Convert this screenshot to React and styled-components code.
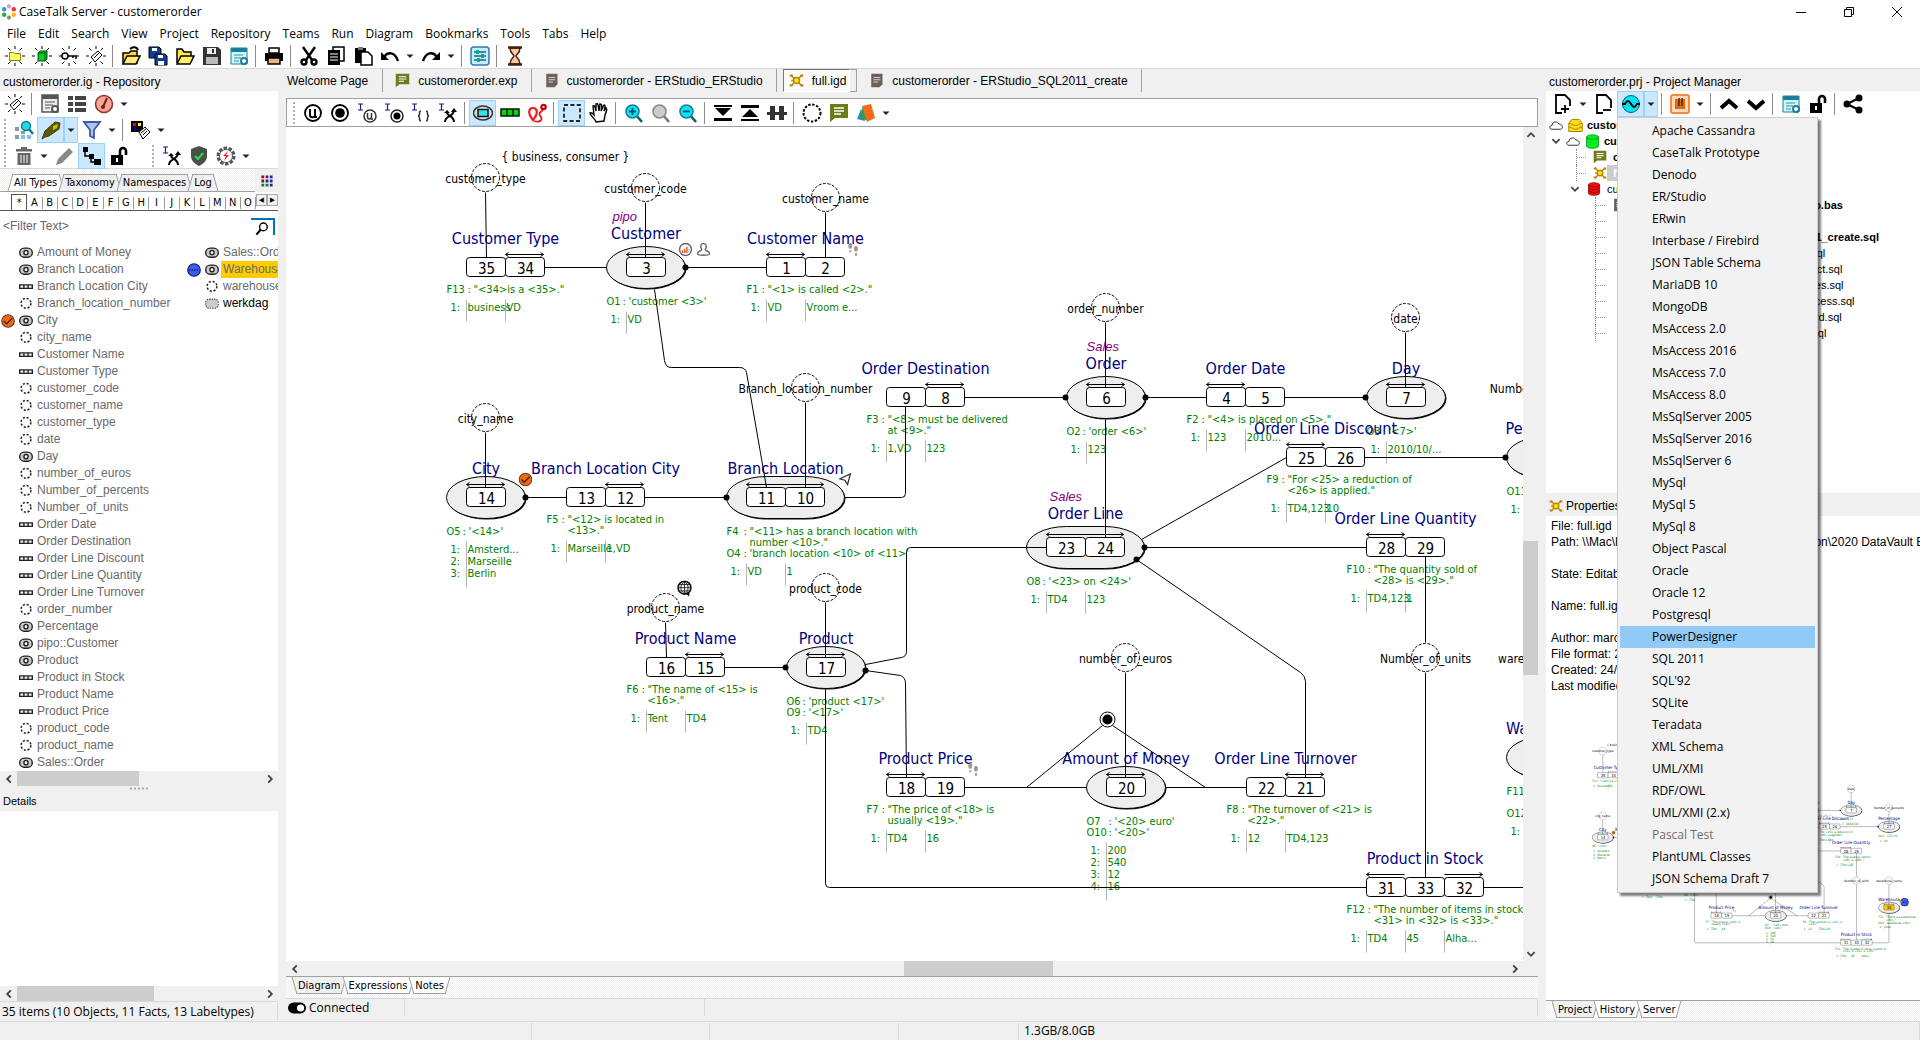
/**
 *
 * CaseTalk workspace
 *
 */

import React from 'react';
import styled, { createGlobalStyle, css } from 'styled-components';

const palette = {
  face: '#f0f0f0',
  line: '#d9d9d9',
  edge: '#a0a0a0',
  thumb: '#cdcdcd',
  hot: '#cce8ff',
  hotEdge: '#99d1ff',
  gold: '#ffcc00',
  navy: '#000080',
  green: '#008000',
  purple: '#800080',
};

const fonts = {
  ui: '"Open Sans", "Noto Sans", sans-serif',
  sans: '"Liberation Sans", Arial, sans-serif',
  tahoma: '"DejaVu Sans Condensed", "DejaVu Sans", sans-serif',
};

const GlobalStyle = createGlobalStyle`
  * { box-sizing: border-box; }
  body {
    margin: 0;
    background: ${palette.face};
    color: #000;
    font: 12px/16px ${fonts.ui};
    overflow: hidden;
  }
  button, input { font: inherit; color: inherit; }
  ul { list-style: none; margin: 0; padding: 0; }
`;

/* ---------- icons, all on a 20x20 grid ---------- */

const rays = <path d="M10 0v3M10 17v3M0 10h3M17 10h3M3 2l2.500 2.500M17 2l-2.500 2.500M3 18l2.500-2.500M17 18l-2.500-2.500" stroke="#000" />;
const caret = <path d="M5 8h10l-5 5z" fill="#222" />;
const pageLines = (
  <g>
    <path d="M2 2h16v16H2z" fill="#d9f4fb" stroke="#1b7f99" />
    <path d="M2 2h16v4H2z" fill="#1b7f99" />
    <path d="M5 9h9M5 12h7M5 15h5" stroke="#1b9cba" />
    <circle cx="15" cy="15" r="3" fill="#fff" stroke="#1b7f99" strokeWidth="2" />
  </g>
);
const pin = (
  <g stroke="#1a1a80" strokeWidth="1.200">
    <path d="M1 1h5M1 7h5M3.500 1v6" />
  </g>
);
const lockOpen = (
  <g>
    <path d="M2 9h12v10H2z" />
    <path d="M11 9V5a3 3 0 0 1 6 0v4" fill="none" stroke="#000" strokeWidth="2.600" />
    <path d="M8 12v4" stroke="#fff" strokeWidth="2" />
  </g>
);
const lens = (fill, sign) => (
  <g>
    <path d="M12 12l6 7" stroke="#155e6b" strokeWidth="2.600" />
    <circle cx="8.500" cy="8.500" r="6.500" fill={fill} stroke="#1f7f8c" strokeWidth="1.600" />
    <path d={sign} stroke="#064a55" strokeWidth="1.800" />
  </g>
);
const molecule = (
  <g>
    <path d="M3 3l14 14M17 3L3 17M3 10h4" stroke="#b8860b" strokeWidth="2" />
    <circle cx="10" cy="10" r="4" fill="#ffe600" stroke="#b8860b" strokeWidth="2" />
    <path d="M1 2h4v3H1zM15 2h4v3h-4zM1 15h4v3H1zM15 15h4v3h-4z" fill="#b8860b" />
  </g>
);
const scroll = (
  <g>
    <path d="M3 1h15v14l-4 4H3z" fill="#6d5f5a" />
    <path d="M6 6h9M6 9h9M6 12h6" stroke="#d8d0cc" strokeWidth="1.400" />
  </g>
);
const chat = (
  <g>
    <path d="M1 1h18v14H6l-5 4z" fill="#6f7a1a" />
    <path d="M5 5h10M5 8h10M5 11h7" stroke="#fff" strokeWidth="1.500" />
  </g>
);
const drum = (fill, stroke) => (
  <g fill={fill} stroke={stroke}>
    <path d="M2 4v12c0 4 16 4 16 0V4" />
    <ellipse cx="10" cy="4" rx="8" ry="3" />
  </g>
);

const art = {
  caret,
  newProject: <g>{rays}<path d="M4.500 6.500h4l1 1h6v7h-11z" fill="#ffff66" stroke="#8a8a00" /></g>,
  newModel: <g>{rays}<path d="M6 7l2-2h7v8l-2 2H6z" fill="#00d02a" stroke="#004d10" /><path d="M6 7h7v8M13 7l2-2" fill="none" stroke="#004d10" /></g>,
  newKey: <g>{rays}<circle cx="6" cy="10" r="3" fill="#fff" stroke="#000" strokeWidth="1.500" /><path d="M9 10h8v3M14 10v2" fill="none" stroke="#000" strokeWidth="1.500" /></g>,
  newTag: <g>{rays}<path d="M5 11l7-6 4 4-7 7z" fill="#fff" stroke="#000" /><path d="M8 12l5-5" stroke="#000" /></g>,
  openRecent: <g><path d="M2 7h6l2-2h6v12H2z" fill="#ffd92e" stroke="#000" strokeWidth="1.500" /><path d="M2 18l4-8h13l-4 8z" fill="#ffec7a" stroke="#000" strokeWidth="1.500" /><path d="M9 3c3-3 7-2 8 1" fill="none" stroke="#000" strokeWidth="2" /></g>,
  saveAll: <g fill="#0f3f9e" stroke="#000"><path d="M1 1h10l2 2v9H1z" /><path d="M7 8h10l2 2v9H7z" /><path d="M4 2h5v3H4zM10 9h5v3h-5zM10 15h6v4h-6z" fill="#fff" stroke="none" /></g>,
  open: <g strokeWidth="1.500" stroke="#000"><path d="M2 17V3h5l2 3h7v4" fill="#ffe94d" /><path d="M2 18l4-8h13l-4 8z" fill="#fff36b" /></g>,
  save: <g><path d="M1 1h15l3 3v15H1z" fill="#333" /><path d="M5 2h9v6H5z" fill="#eee" /><path d="M10 3h2v4h-2z" fill="#333" /><path d="M4 11h12v7H4z" fill="#bbb" /></g>,
  props: pageLines,
  print: <g><path d="M5 2h10v5H5z" fill="#fff" stroke="#000" strokeWidth="1.500" /><path d="M1 7h18v8H1z" /><path d="M4 12h12v6H4z" fill="#eab38c" stroke="#000" strokeWidth="1.500" /></g>,
  cut: <g fill="none" stroke="#000" strokeWidth="2.400"><path d="M4 1l9 13M16 1L7 14" /><circle cx="5" cy="16" r="2.500" /><circle cx="15" cy="16" r="2.500" /></g>,
  copy: <g><path d="M7 1h11v14H7z" fill="#fff" stroke="#000" strokeWidth="1.500" /><path d="M2 4h12v15H2z" /><path d="M4 8h8M4 11h8M4 14h8" stroke="#fff" /></g>,
  paste: <g><path d="M2 2h11v15H2z" /><path d="M5 1h5v3H5z" fill="#777" /><path d="M8 6h7l4 4v9H8z" fill="#fff" stroke="#000" strokeWidth="1.500" /></g>,
  undo: <g><path d="M4 11c4-6 11-5 14 4" fill="none" stroke="#000" strokeWidth="2.400" /><path d="M1 6v8h8z" /></g>,
  redo: <g><path d="M16 11c-4-6-11-5-14 4" fill="none" stroke="#000" strokeWidth="2.400" /><path d="M19 6v8h-8z" /></g>,
  options: <g><rect x="1" y="1" width="18" height="18" rx="3" fill="#c9ebff" stroke="#2f7ea8" strokeWidth="1.500" /><path d="M4 6h12M4 10h12M4 14h12" stroke="#156c8a" strokeWidth="1.400" /><path d="M6 4h3v4H6zM11 8h3v4h-3zM7 12h3v4H7z" fill="#00b09b" /></g>,
  hourglass: <g stroke="#4a1c0c" strokeWidth="1.500" fill="#f3c9a5"><path d="M5 2h10c0 5-3 6-4 8 1 2 4 3 4 8H5c0-5 3-6 4-8-1-2-4-3-4-8z" /><path d="M3 1.500h14M3 18.500h14" strokeWidth="2.500" /></g>,
  sheet: <g><path d="M2 1h16v17H2z" fill="#ececec" stroke="#555" strokeWidth="1.500" /><path d="M2 1h16v4H2z" fill="#555" /><path d="M5 8h10M5 11h8M5 14h5" stroke="#555" /><circle cx="15" cy="15" r="3" fill="#fff" stroke="#555" strokeWidth="2" /></g>,
  table: <path d="M1 2h5v4H1zM8 2h11v4H8zM1 8h5v4H1zM8 8h11v4H8zM1 14h5v4H1zM8 14h11v4H8z" fill="#444" />,
  gauge: <g><circle cx="10" cy="10" r="8.500" fill="#f3a79b" stroke="#8f3326" strokeWidth="1.500" /><path d="M9 13l4-9" stroke="#7a1d10" strokeWidth="2" /><circle cx="9" cy="13" r="2" fill="#7a1d10" /></g>,
  find: <g><path d="M1 7h4v4H1zM1 15h4v4H1zM7 11h4v3H7z" fill="#8a9aa5" /><path d="M7 15h4v4H7zM13 15h4v4h-4z" fill="#7cc7ea" /><circle cx="12" cy="6" r="4.500" fill="#27d4ea" stroke="#0b7f92" strokeWidth="1.500" /><path d="M15 9l4 5" stroke="#0b7f92" strokeWidth="2.500" /></g>,
  marker: <g><path d="M1 19l3-8L14 2l5 1-1 6-10 7-4 1z" fill="#5c5a00" stroke="#3f3e00" /><path d="M12 6l5-2-1 4-4 2z" fill="#c9c400" /></g>,
  funnel: <path d="M2 2h16l-6 8v8l-4-2v-6z" fill="#a7c7f2" stroke="#3c5aa6" strokeWidth="1.800" />,
  palette: <g><path d="M0 1h12v11H0z" /><path d="M2 3h3v3H2z" fill="#f00" /><path d="M7 3h3v3H7z" fill="#ff0" /><path d="M2 10l2-3 2 3z" fill="#00f" /><path d="M8 12l6-5 5 5-7 7z" fill="#fff" stroke="#000" /><path d="M10 13l5-4M12 15l4-4" stroke="#000" /></g>,
  trash: <g fill="#666"><path d="M2 3h16v2.500H2zM7 1h6v2H7z" /><path d="M3.500 7h13v12h-13z" /><path d="M7 9v8M10 9v8M13 9v8" stroke="#fff" /></g>,
  pencil: <path d="M1 19l2-6L14 2l4 4L7 17z" fill="#888" />,
  tree: <g><path d="M1 1h5v5H1zM7 8h5v5H7zM12 13h7v6h-7z" /><path d="M3 5v5h6v6h5" fill="none" stroke="#000" strokeWidth="1.500" /></g>,
  lockOpen,
  split: <g>{pin}<path d="M7 19c0-7 9-5 9-12M16 19c0-7-7-5-7-10" fill="none" stroke="#000" strokeWidth="2" /><path d="M13 9l3-4 3 4zM6 10l3-3 3 3z" /></g>,
  shield: <g><path d="M10 0l8 3v7c0 5-4 8-8 10-4-2-8-5-8-10V3z" fill="#4a4f4a" /><path d="M6 10l3 3 5-6" fill="none" stroke="#22e04a" strokeWidth="2" /></g>,
  gear: <g><circle cx="10" cy="10" r="8" fill="#fff" stroke="#555" strokeWidth="3" strokeDasharray="3.500 1.500" /><circle cx="10" cy="10" r="6.500" fill="#fff" stroke="#555" /><path d="M12 5l-5 5h3l-2 5 5-6h-3z" fill="#f21d1d" /></g>,
  letters: <g><path d="M2 2h4v4H2zM2 8h4v4H2zM8 2h4v4H8z" fill="#7a1730" /><path d="M14 2h4v4h-4zM8 8h4v4H8zM14 8h4v4h-4zM14 14h4v4h-4z" fill="#1a2a9a" /><path d="M2 14h4v4H2zM8 14h4v4H8z" fill="#127a3a" /></g>,
  magnifier: <g fill="none" stroke="#000"><circle cx="12" cy="7" r="5.500" strokeWidth="2" /><path d="M8 11l-6 7" strokeWidth="3" /></g>,
  total: <g fill="none" stroke="#000"><circle cx="10" cy="10" r="8" strokeWidth="1.800" /><path d="M7 6v6c0 3 5 3 5 0V6M12 6v8h2" strokeWidth="2" /></g>,
  ring: <g><circle cx="10" cy="10" r="8" fill="none" stroke="#000" strokeWidth="1.800" /><circle cx="10" cy="10" r="4.800" /></g>,
  totalPin: <g>{pin}<g fill="none" stroke="#333"><circle cx="13" cy="13" r="6" strokeWidth="1.500" /><path d="M10.500 10v4c0 2.500 4 2.500 4 0v-4v6h1.500" strokeWidth="1.500" /></g></g>,
  ringPin: <g>{pin}<circle cx="13" cy="13" r="6" fill="none" stroke="#222" strokeWidth="1.500" /><circle cx="13" cy="13" r="3.500" /></g>,
  bracePin: <g>{pin}<path d="M10 8c-3 0 0 5-3 5 3 0 0 5 3 5M15 8c3 0 0 5 3 5-3 0 0 5-3 5" fill="none" stroke="#333" strokeWidth="1.500" /></g>,
  object: <g><ellipse cx="10" cy="10" rx="9.500" ry="7" fill="#ddd" stroke="#333" strokeWidth="1.500" /><path d="M5 6.500h10v7H5z" fill="#2ee6f5" stroke="#111" strokeWidth="1.500" /></g>,
  fact: <path d="M1 6h6v7H1zM7 6h6v7H7zM13 6h6v7h-6z" fill="#00d800" stroke="#111" strokeWidth="1.500" />,
  route: <g fill="none" stroke="#f01818" strokeWidth="2.200"><path d="M6 17C0 10 2 5 6 5s6 5 0 12z" /><path d="M7 18c5 2 9-1 7-4s-3-3 2-7" strokeWidth="1.800" /><circle cx="16.500" cy="4" r="2.200" stroke="#c00" /></g>,
  select: <path d="M2 2h16v16H2z" fill="none" stroke="#222" strokeWidth="1.800" strokeDasharray="4 2.400" />,
  hand: <path d="M7 19c-1-4-6-6-6-9 2-1 3 1 4 2L4 3c2-1 2 1 3 5V1c2-1 2 0 3 7l1-7c2 0 2 1 1 7l3-6c2 0 1 2 0 6l2-3c2 1 0 4-1 7l-1 6z" fill="#fff" stroke="#000" strokeWidth="1.400" />,
  zoomIn: lens('#00e5ff', 'M5 8.500h7M8.500 5v7'),
  zoomReset: <g><path d="M12 12l6 7" stroke="#777" strokeWidth="2.600" /><circle cx="8.500" cy="8.500" r="6.500" fill="#ccc" stroke="#888" strokeWidth="1.600" /></g>,
  zoomOut: lens('#00e5ff', 'M5 8.500h7'),
  alignDown: <path d="M1 2h18v2H1zM2 5h16l-8 8zM1 15h18v3H1z" />,
  alignUp: <path d="M1 2h18v3H1zM10 6l8 8H2zM1 16h18v2H1z" />,
  alignMid: <path d="M3 3h5v14H3zM12 3h5v14h-5zM0 9h20v3H0z" fill="#333" />,
  label: <circle cx="10" cy="10" r="8.500" fill="none" stroke="#000" strokeWidth="2" strokeDasharray="2.400 1.600" />,
  chat,
  cards: <g><path d="M1 16l4-10 4 12z" fill="#2d7ff0" /><path d="M3 15L7 3l6 15z" fill="#2aa04c" /><path d="M6 3l9-2 4 14-8 4z" fill="#f26b1d" /></g>,
  addFile: <g fill="#fff" stroke="#000" strokeWidth="1.800"><path d="M9 19H3V1h9l5 5v6" /><path d="M12 11v8M8 15h8" /></g>,
  removeFile: <g fill="#fff" stroke="#000" strokeWidth="1.800"><path d="M9 19H3V1h9l5 5v8" /><path d="M9 16h8" /></g>,
  generate: <g><circle cx="10" cy="10" r="8.500" fill="#00e5f5" stroke="#05626b" /><path d="M1 10h3c2-4 4-4 6 0s4 4 6 0h3" fill="none" stroke="#000" strokeWidth="2" /></g>,
  package: <g><rect x="1" y="1" width="18" height="18" rx="2" fill="#ffd9b8" stroke="#f08a3c" strokeWidth="2" /><path d="M5 5h10v10H5z" fill="#d96a10" /><path d="M9 4v8M12 4v8" stroke="#5a2500" strokeWidth="1.500" /></g>,
  up: <path d="M2 14l8-7 8 7" fill="none" stroke="#000" strokeWidth="4" />,
  down: <path d="M2 7l8 7 8-7" fill="none" stroke="#000" strokeWidth="4" />,
  share: <g><path d="M16 4L4 10l12 6" fill="none" stroke="#000" strokeWidth="2" /><circle cx="16" cy="4" r="3.500" /><circle cx="4" cy="10" r="3.500" /><circle cx="16" cy="16" r="3.500" /></g>,
  molecule,
  scroll,
  cloud: <path d="M4 15c-4 0-4-5 0-5 0-6 8-6 9-2 6 0 6 7 2 7z" fill="#fff" stroke="#333" strokeWidth="1.300" />,
  cabinet: <g fill="#ffd91a" stroke="#a88a00" strokeWidth="1.300"><path d="M1 7l4-5h10l4 5v11H1z" /><path d="M1 7c5 0 4 3 9 3s4-3 9-3M1 12c5 0 4 3 9 3s4-3 9-3" fill="none" /></g>,
  greenDrum: drum('#00f01e', '#008a14'),
  redDrum: <g>{drum('#f20d0d', '#7a0000')}<path d="M2 8c0 4 16 4 16 0M2 12c0 4 16 4 16 0" fill="none" stroke="#7a0000" /></g>,
  chevron: <path d="M4 7l6 6 6-6" fill="none" stroke="#444" strokeWidth="3" />,
  logo: <g><circle cx="10" cy="3" r="2.600" fill="#c9a0d8" /><circle cx="16" cy="6.500" r="2.800" fill="#f0392b" /><circle cx="16" cy="13.500" r="2.800" fill="#f5b921" /><circle cx="10" cy="17" r="2.600" fill="#8a8a8a" /><circle cx="4" cy="13.500" r="2.800" fill="#3aa34a" /><circle cx="4" cy="6.500" r="2.800" fill="#2b9be0" /></g>,
  toggle: <g><rect x="0" y="4" width="20" height="12" rx="6" /><circle cx="14" cy="10" r="4" fill="#fff" /></g>,
  objectType: <g><rect x="1" y="3" width="18" height="13" rx="6.500" fill="#ccc" stroke="#222" strokeWidth="2" /><circle cx="10" cy="9.500" r="3" fill="#fff" stroke="#222" strokeWidth="2" /></g>,
  factType: <path d="M1 7h6v5H1zM7 7h6v5H7zM13 7h6v5h-6z" fill="#eee" stroke="#222" strokeWidth="2" />,
  labelType: <circle cx="10" cy="9" r="7" fill="none" stroke="#222" strokeWidth="2.200" strokeDasharray="3 2.500" />,
  valueType: <rect x="1" y="3" width="18" height="13" rx="5" fill="#ccc" stroke="#444" strokeWidth="1.500" strokeDasharray="2 1.500" />,
  check: <g><circle cx="10" cy="10" r="9" fill="#f26a10" stroke="#6b3a1a" strokeWidth="1.500" /><path d="M4 10l4 4 8-8" fill="none" stroke="#3f2412" strokeWidth="2" /></g>,
  dots: <g><circle cx="10" cy="10" r="9" fill="#3a5cf5" stroke="#101860" strokeWidth="1.500" /><path d="M3 10h14" stroke="#101860" strokeWidth="2" strokeDasharray="2 1.500" /></g>,
};

const Svg = styled.svg`
  display: block;
  flex: none;
  width: ${p => p.$size}px;
  height: ${p => p.$size}px;
`;

const Icon = ({ name, size = 20 }) => (
  <Svg $size={size} viewBox="0 0 20 20" aria-hidden="true">{art[name]}</Svg>
);

/* ---------- window chrome ---------- */

const Window = styled.div`
  display: flex;
  flex-direction: column;
  height: 100vh;
`;

const TitleBar = styled.header`
  display: flex;
  align-items: center;
  gap: 2px;
  height: 24px;
  padding-left: 1px;
  background: #fff;
  & h1 {
    flex: 1;
    margin: 0;
    font-size: 12px;
    font-weight: 400;
  }
`;

const Caption = styled.button`
  display: flex;
  align-items: center;
  justify-content: center;
  width: 46px;
  height: 24px;
  padding: 0;
  border: 0;
  background: none;
`;

const MenuBar = styled.nav`
  display: flex;
  height: 19px;
  padding-left: 1px;
  background: #fff;
  & button {
    padding: 0 6px;
    border: 0;
    background: none;
    line-height: 17px;
  }
`;

const Toolbar = styled.div`
  display: flex;
  align-items: center;
  flex: none;
  height: ${p => p.$height || 26}px;
  padding-left: ${p => p.$indent || 0}px;
  background: #fff;
  ${p => p.$framed && css`border: 1px solid ${palette.edge};`}
  ${p => p.$ruled && css`border-bottom: 1px solid ${palette.line};`}
`;

const ToolButton = styled.button`
  display: flex;
  align-items: center;
  justify-content: center;
  flex: none;
  width: ${p => (p.$narrow ? 14 : 27)}px;
  height: 26px;
  padding: 0;
  border: 1px solid ${p => (p.$on ? palette.hotEdge : 'transparent')};
  background: ${p => (p.$on ? palette.hot : 'none')};
`;

const Rule = styled.i`
  flex: none;
  width: 2px;
  height: 22px;
  margin: 0 3px;
  border-left: 1px solid #8c8c8c;
`;

const Grip = styled.i`
  flex: none;
  width: 10px;
  height: 24px;
  margin-left: ${p => p.$gap || 0}px;
  background: radial-gradient(circle, #b0b0b0 1px, transparent 1px) 0 0 / 10px 4px;
`;

/* "|" is a rule, ":" a grip, a leading "*" marks a pressed button */
const Tools = ({ items }) => items.map((item, i) => {
  if (item === '|') return <Rule key={i} />;
  if (item === ':') return <Grip key={i} $gap={i ? 16 : 0} />;
  const on = item[0] === '*';
  const name = on ? item.slice(1) : item;
  const narrow = name === 'caret';
  return (
    <ToolButton key={i} $on={on} $narrow={narrow} aria-label={name}>
      <Icon name={name} size={narrow ? 14 : 20} />
    </ToolButton>
  );
});

const Workspace = styled.main`
  display: flex;
  gap: 8px;
  flex: 1;
  min-height: 0;
  border-top: 1px solid ${palette.line};
`;

const Column = styled.section`
  display: flex;
  flex-direction: column;
  flex: ${p => (p.$width ? `0 0 ${p.$width}px` : '1')};
  min-width: 0;
  min-height: 0;
`;

const PaneTitle = styled.h2`
  display: flex;
  align-items: center;
  gap: 3px;
  flex: none;
  height: ${p => p.$height || 22}px;
  margin: 0;
  padding: ${p => p.$top || 0}px 3px 0;
  font: 400 ${p => p.$size || 12}px/16px ${fonts.sans};
`;

const StatusBar = styled.footer`
  display: flex;
  flex: none;
  height: ${p => p.$height || 19}px;
  align-items: ${p => (p.$top ? 'flex-start' : 'center')};
  border-top: 1px solid ${palette.line};
`;

const StatusCell = styled.span`
  display: flex;
  align-items: center;
  gap: 3px;
  flex: ${p => (p.$width ? `0 0 ${p.$width}px` : '1')};
  height: 17px;
  padding-left: ${p => p.$pad || 2}px;
  border-right: 1px solid ${palette.line};
  white-space: nowrap;
`;

/* ---------- scroll bars ---------- */

const Bar = styled.div`
  display: flex;
  flex: none;
  flex-direction: ${p => (p.$vertical ? 'column' : 'row')};
  align-items: center;
  ${p => (p.$vertical ? 'width: 15px;' : 'height: 15px;')}
  padding-right: ${p => (p.$corner ? 15 : 0)}px;
  background: ${palette.face};
`;

const Arrow = styled.button`
  display: flex;
  align-items: center;
  justify-content: center;
  flex: none;
  width: 17px;
  height: 15px;
  padding: 0;
  border: 0;
  background: none;
  & svg { transform: rotate(${p => p.$turn}deg); }
`;

const Track = styled.div`
  display: flex;
  flex: 1;
  align-self: stretch;
  flex-direction: ${p => (p.$vertical ? 'column' : 'row')};
  &:before { content: ''; flex: ${p => p.$before}; }
  &:after { content: ''; flex: ${p => p.$after}; }
  & i { flex: ${p => p.$thumb}; background: ${palette.thumb}; }
`;

const ScrollBar = ({ vertical, corner, before, thumb, after }) => (
  <Bar $vertical={vertical} $corner={corner}>
    <Arrow $turn={vertical ? 180 : 90} aria-label="Scroll back"><Icon name="chevron" size={12} /></Arrow>
    <Track $vertical={vertical} $before={before} $thumb={thumb} $after={after}><i /></Track>
    <Arrow $turn={vertical ? 0 : -90} aria-label="Scroll forward"><Icon name="chevron" size={12} /></Arrow>
  </Bar>
);

/* ---------- notebook tabs with slanted edges ---------- */

const TabStrip = styled.div`
  display: flex;
  flex: none;
  align-items: ${p => (p.$below ? 'flex-start' : 'flex-end')};
  height: ${p => p.$height}px;
  padding-left: ${p => (p.$below ? 8 : 10)}px;
  font: 11px/16px ${fonts.tahoma};
  background: repeating-conic-gradient(#fff 0 25%, ${palette.face} 0 50%) 0 0 / 2px 2px;
  ${p => (p.$below
    ? css`border-top: 1px solid ${palette.edge};`
    : css`border-bottom: 1px solid ${palette.edge};`)}
`;

const Tab = styled.button`
  position: relative;
  z-index: 0;
  height: 17px;
  padding: 0 4px;
  border: 0;
  background: none;
  &:before, &:after {
    content: '';
    position: absolute;
    z-index: -1;
    top: 0;
    bottom: 0;
    width: 52%;
    background: ${p => p.$fill};
    border: 0 solid ${palette.edge};
    ${p => (p.$below ? 'border-bottom-width: 1px;' : 'border-top-width: 1px;')}
  }
  &:before {
    left: 0;
    border-left-width: 1px;
    transform: skewX(${p => (p.$below ? 16 : -16)}deg);
  }
  &:after {
    right: 0;
    border-right-width: 1px;
    transform: skewX(${p => (p.$below ? -16 : 16)}deg);
  }
`;

const Tabs = ({ names, height, below }) => (
  <TabStrip $height={height} $below={below}>
    {names.map((name, i) => (
      <Tab key={name} $below={below} $fill={(i === 0) === !below ? '#fff' : palette.face}>{name}</Tab>
    ))}
  </TabStrip>
);

/* ---------- repository ---------- */

const TypeTabs = styled.div`
  display: grid;
  grid-template-columns: 1fr 18px;
  column-gap: 5px;
  align-items: center;
`;

const LetterRow = styled.div`
  display: flex;
  align-items: flex-end;
  flex: none;
  height: 19px;
  padding-left: 11px;
  overflow: hidden;
  background: #fff;
  border-bottom: 1px solid #555;
  font: 11px/14px ${fonts.tahoma};
`;

const Letter = styled.button`
  flex: 1;
  height: ${p => (p.$on ? 16 : 12)}px;
  margin-bottom: ${p => (p.$on ? 0 : 1)}px;
  padding: 0;
  border: 0 solid ${p => (p.$on ? '#555' : '#999')};
  border-width: ${p => (p.$on ? '1px 1px 0' : '0 1px 0 0')};
  background: #fff;
  line-height: 12px;
`;

const Spin = styled.button`
  width: 11px;
  height: 12px;
  margin-bottom: 4px;
  padding: 0;
  border: 1px solid #aaa;
  background: ${palette.face};
  font-size: 7px;
  line-height: 9px;
`;

const FilterRow = styled.label`
  display: flex;
  align-items: center;
  flex: none;
  height: 33px;
  padding: 0 3px 3px;
  background: #fff;
  font: 12px/16px ${fonts.sans};
  & input {
    flex: 1;
    min-width: 0;
    padding: 0;
    border: 0;
    outline: 0;
    &::placeholder { color: #666; opacity: 1; }
  }
`;

const Seek = styled.button`
  width: 24px;
  height: 17px;
  padding: 2px 4px;
  border: solid #0072b5;
  border-width: 2px 2px 0 0;
  background: #fff;
`;

const TypeLists = styled.div`
  display: grid;
  grid-template-columns: 186px 1fr;
  flex: none;
  overflow: hidden;
  background: #fff;
  font: 12px/17px ${fonts.sans};
  color: #6a6a6a;
`;

const TypeRow = styled.li`
  display: grid;
  grid-template-columns: 16px 14px 1fr;
  align-items: center;
  column-gap: 2px;
  height: 17px;
  padding-left: 1px;
  white-space: nowrap;
  & span {
    padding: 0 2px;
    background: ${p => (p.$hot ? palette.gold : 'none')};
    color: ${p => (p.$dark ? '#000' : 'inherit')};
  }
`;

const Splitter = styled.div`
  flex: none;
  width: 20px;
  height: 5px;
  margin: 0 auto;
  background: radial-gradient(circle, #aaa 1px, transparent 1px) center / 4px 4px;
`;

const Blank = styled.div`
  flex: 1;
  background: #fff;
`;

const O = 'objectType';
const F = 'factType';
const L = 'labelType';

const typesLeft = [
  [O, 'Amount of Money'], [O, 'Branch Location'], [F, 'Branch Location City'], [L, 'Branch_location_number'],
  [O, 'City', 'check'], [L, 'city_name'], [F, 'Customer Name'], [F, 'Customer Type'], [L, 'customer_code'],
  [L, 'customer_name'], [L, 'customer_type'], [L, 'date'], [O, 'Day'], [L, 'number_of_euros'],
  [L, 'Number_of_percents'], [L, 'Number_of_units'], [F, 'Order Date'], [F, 'Order Destination'],
  [F, 'Order Line Discount'], [F, 'Order Line Quantity'], [F, 'Order Line Turnover'], [L, 'order_number'],
  [O, 'Percentage'], [O, 'pipo::Customer'], [O, 'Product'], [F, 'Product in Stock'], [F, 'Product Name'],
  [F, 'Product Price'], [L, 'product_code'], [L, 'product_name'], [O, 'Sales::Order'],
];

const typesRight = [
  [O, 'Sales::Order Line'], [O, 'Warehouse', 'dots'], [L, 'warehouse_name'], ['valueType', 'werkdag'],
];

const TypeList = ({ rows }) => (
  <ul>
    {rows.map(([icon, name, badge]) => (
      <TypeRow key={name} $hot={badge === 'dots'} $dark={icon === 'valueType'}>
        {badge ? <Icon name={badge} size={14} /> : <i />}
        <Icon name={icon} size={14} />
        <span>{name}</span>
      </TypeRow>
    ))}
  </ul>
);

const Repository = () => (
  <Column $width={278}>
    <PaneTitle $top={4}>customerorder.ig - Repository</PaneTitle>
    <Toolbar $indent={1}><Tools items={['newTag', '|', 'sheet', 'table', 'gauge', 'caret']} /></Toolbar>
    <Toolbar><Tools items={[':', 'find', '*marker', '*caret', 'funnel', 'caret', '|', 'palette', 'caret']} /></Toolbar>
    <Toolbar $ruled><Tools items={[':', 'trash', 'caret', 'pencil', '*tree', 'lockOpen', ':', 'split', 'shield', 'gear', 'caret']} /></Toolbar>
    <TypeTabs>
      <Tabs names={['All Types', 'Taxonomy', 'Namespaces', 'Log']} height={23} />
      <Icon name="letters" size={14} />
    </TypeTabs>
    <LetterRow>
      {'*ABCDEFGHIJKLMNO'.split('').map(c => <Letter key={c} $on={c === '*'}>{c}</Letter>)}
      <Spin aria-label="Previous letters">◀</Spin>
      <Spin aria-label="Next letters">▶</Spin>
    </LetterRow>
    <FilterRow>
      <input placeholder="<Filter Text>" aria-label="Filter Text" />
      <Seek aria-label="Find"><Icon name="magnifier" size={14} /></Seek>
    </FilterRow>
    <TypeLists>
      <TypeList rows={typesLeft} />
      <TypeList rows={typesRight} />
    </TypeLists>
    <ScrollBar before={0} thumb={122} after={122} />
    <Splitter />
    <PaneTitle $height={20} $size={11}>Details</PaneTitle>
    <Blank />
    <ScrollBar before={0} thumb={137} after={107} />
    <StatusBar $height={20}><StatusCell>35 items (10 Objects, 11 Facts, 13 Labeltypes)</StatusCell></StatusBar>
  </Column>
);

/* ---------- diagram ---------- */

const ROLE = 39;

const labels = [
  [486, 178, 'customer_type'], [646, 188, 'customer_code'], [826, 198, 'customer_name'],
  [486, 418, 'city_name'], [806, 388, 'Branch_location_number'], [666, 608, 'product_name'],
  [826, 588, 'product_code'], [1106, 308, 'order_number'], [1406, 318, 'date'],
  [1126, 658, 'number_of_euros'], [1426, 658, 'Number_of_units'],
  [1546, 388, 'Number_of_percents'], [1546, 658, 'warehouse_name'],
];

/* bars: [first role, last role, heads] - l and r tell on which side an arrow head is drawn */
const types = [
  { x: 467, y: 258, name: 'Customer Type', roles: [35, 34], bars: [[1, 1, 'lr']], text: [['F13', 7, '"<34>is a <35>."']], rows: [['business', 'VD']] },
  { x: 627, y: 258, name: 'Customer', ns: 'pipo', nsX: 613, object: true, roles: [3], bars: [[0, 0, 'lr']], text: [['O1', 2, "'customer <3>'"]], rows: [['VD']] },
  { x: 767, y: 258, name: 'Customer Name', roles: [1, 2], bars: [[0, 0, 'lr']], text: [['F1', 1, '"<1> is called <2>."']], rows: [['VD', 'Vroom e...']] },
  { x: 467, y: 488, name: 'City', object: true, roles: [14], bars: [[0, 0, 'lr']], text: [['O5', 2, "'<14>'"]], rows: [['Amsterd...'], ['Marseille'], ['Berlin']] },
  { x: 567, y: 488, name: 'Branch Location City', roles: [13, 12], bars: [[1, 1, 'lr']], text: [['F5', 1, '"<12> is located in', '<13>."']], rows: [['Marseille', '1,VD']] },
  { x: 747, y: 488, name: 'Branch Location', object: true, roles: [11, 10], bars: [[0, 1, 'lr']], text: [['F4', 3, '"<11> has a branch location with', 'number <10>."'], ['O4', 3, "'branch location <10> of <11>'"]], rows: [['VD', '1']] },
  { x: 647, y: 658, name: 'Product Name', roles: [16, 15], bars: [[1, 1, 'lr']], text: [['F6', 1, '"The name of <15> is', '<16>."']], rows: [['Tent', 'TD4']] },
  { x: 807, y: 658, name: 'Product', object: true, roles: [17], bars: [[0, 0, 'lr']], text: [['O6', 2, "'product <17>'"], ['O9', 2, "'<17>'"]], rows: [['TD4']] },
  { x: 887, y: 388, name: 'Order Destination', roles: [9, 8], bars: [[1, 1, 'lr']], text: [['F3', 1, '"<8> must be delivered', 'at <9>."']], rows: [['1,VD', '123']] },
  { x: 1087, y: 388, name: 'Order', ns: 'Sales', nsX: 1087, object: true, roles: [6], bars: [[0, 0, 'lr']], text: [['O2', 2, "'order <6>'"]], rows: [['123']] },
  { x: 1207, y: 388, name: 'Order Date', roles: [4, 5], bars: [[0, 0, 'lr']], text: [['F2', 1, '"<4> is placed on <5>."']], rows: [['123', '2010...']] },
  { x: 1387, y: 388, name: 'Day', object: true, roles: [7], bars: [[0, 0, 'lr']], text: [['O3', 2, "'<7>'"]], rows: [['2010/10/...']] },
  { x: 1287, y: 448, name: 'Order Line Discount', roles: [25, 26], bars: [[0, 0, 'lr']], text: [['F9', 1, '"For <25> a reduction of', '<26> is applied."']], rows: [['TD4,123', '10']] },
  { x: 1047, y: 538, name: 'Order Line', ns: 'Sales', nsX: 1050, object: true, roles: [23, 24], bars: [[0, 1, 'lr']], text: [['O8', 2, "'<23> on <24>'"]], rows: [['TD4', '123']] },
  { x: 1367, y: 538, name: 'Order Line Quantity', roles: [28, 29], bars: [[0, 0, 'lr']], text: [['F10', 7, '"The quantity sold of', '<28> is <29>."']], rows: [['TD4,123', '1']] },
  { x: 887, y: 778, name: 'Product Price', roles: [18, 19], bars: [[0, 0, 'lr']], text: [['F7', 1, '"The price of <18> is', 'usually <19>."']], rows: [['TD4', '16']] },
  { x: 1107, y: 778, name: 'Amount of Money', object: true, roles: [20], bars: [[0, 0, 'lr']], text: [['O7', 8, "'<20> euro'"], ['O10', 8, "'<20>'"]], rows: [['200'], ['540'], ['12'], ['16']] },
  { x: 1247, y: 778, name: 'Order Line Turnover', roles: [22, 21], bars: [[1, 1, 'lr']], text: [['F8', 1, '"The turnover of <21> is', '<22>."']], rows: [['12', 'TD4,123']] },
  { x: 1367, y: 878, name: 'Product in Stock', roles: [31, 33, 32], bars: [[0, 0, 'l'], [2, 2, 'r']], text: [['F12', 7, '"The number of items in stock of', '<31> in <32> is <33>."']], rows: [['TD4', '45', 'Alha...']] },
  { x: 1527, y: 448, name: 'Percentage', object: true, roles: [27], bars: [[0, 0, 'lr']], text: [['O11', 8, "'<27>%'"]], rows: [['10']] },
  { x: 1527, y: 748, name: 'Warehouse', object: true, gold: true, roles: [30], bars: [[0, 0, 'lr']], text: [['F11', 8, '"There is a warehouse', '<30>."'], ['O12', 8, "'warehouse <30>'"]], rows: [['Utrec...']] },
];

const wires = [
  // label types
  'M486 193L487 258', 'M646 203V258', 'M826 213V258', 'M486 433V488', 'M806 403V488', 'M666 623L667 658',
  'M826 603V658', 'M1106 323V388', 'M1406 333V388', 'M1126 673V778', 'M1426 673V878', 'M1546 403V448', 'M1546 673V748',
  // roles
  'M545 268H607', 'M686 268H767', 'M526 498H567', 'M645 498H727', 'M725 668H787', 'M965 398H1067',
  'M1146 398H1207', 'M1285 398H1367', 'M1365 458H1507', 'M1145 548H1367', 'M965 788H1087', 'M1166 788H1247',
  'M655 290L665 361Q666 368 672 368H740Q746 368 747 373L767 488',
  'M845 498H902Q906 498 906 494V407', 'M1106 420V538', 'M1047 548H911Q907 548 907 552V652Q907 657 902 658L866 665',
  'M866 671L901 676Q906 678 906 684L907 778', 'M1142 540L1287 458',
  'M1137 560L1301 673Q1306 677 1306 682V778', 'M1426 557V643', 'M826 690V884Q826 888 830 888H1367',
  'M1484 888H1542Q1546 888 1546 884V780',
  'M1103 726L1027 788', 'M1113 726L1206 788',
];

const dots = [
  [686, 268], [526, 498], [727, 498], [786, 668], [866, 671], [1066, 398], [1146, 398], [1366, 398],
  [1145, 548], [1137, 560], [1506, 458],
];

const Title = styled.text`
  font: 16px ${fonts.tahoma};
  fill: ${palette.navy};
  text-anchor: middle;
`;

const Space = styled.text`
  font: italic 13px ${fonts.sans};
  fill: ${palette.purple};
`;

const RoleNumber = styled.text`
  font: 15px ${fonts.tahoma};
  text-anchor: middle;
`;

const LabelText = styled.text`
  font: 12px ${fonts.tahoma};
  text-anchor: ${p => p.$anchor || 'middle'};
`;

const Verbal = styled.text`
  font: 11px ${fonts.tahoma};
  fill: ${palette.green};
`;

const Mark = ({ x, y, size, children }) => (
  <svg x={x - (size / 2)} y={y - (size / 2)} width={size} height={size} viewBox="0 0 20 20">{children}</svg>
);

function Type({ x, y, name, ns, nsX, object, gold, roles, bars, text, rows }) {
  const width = roles.length * ROLE;
  let line = y + (object ? 47 : 35) - 11;
  const verbal = text.map(([code, dx, ...lines]) => lines.map((words, i) => {
    line += 11;
    return (
      <g key={code + words}>
        {i === 0 && <Verbal x={x - 20} y={line}>{code}</Verbal>}
        {i === 0 && <Verbal x={x + dx - 6} y={line}>:</Verbal>}
        <Verbal x={x + dx} y={line}>{words}</Verbal>
      </g>
    );
  }));
  const top = line + 18;
  return (
    <g>
      {object && <rect x={x - 20} y={y - 11} width={width + 40} height="42" rx="40" ry="21" fill="#000" transform="translate(1 1)" />}
      {object && <rect x={x - 20} y={y - 11} width={width + 40} height="42" rx="40" ry="21" fill="#eee" stroke="#000" />}
      {ns && <Space x={nsX} y={y - 37}>{ns}</Space>}
      <Title x={x + (width / 2)} y={y - (ns ? 19 : 14)}>{name}</Title>
      {bars.map(([from, to, heads]) => {
        const l = x + (from * ROLE);
        const r = x + ((to + 1) * ROLE) - 1;
        return (
          <path
            key={from}
            fill="none"
            stroke="#000"
            d={`M${l} ${y - 3}H${r}${heads.includes('l') ? `M${l + 3} ${y - 5}l-3 2 3 2` : ''}${heads.includes('r') ? `M${r - 3} ${y - 5}l3 2-3 2` : ''}`}
          />
        );
      })}
      {roles.map((role, i) => (
        <g key={role}>
          <rect x={x + (i * ROLE)} y={y} width={ROLE} height="19" rx="3" fill={gold ? palette.gold : '#fff'} stroke="#000" />
          <RoleNumber x={x + (i * ROLE) + 20} y={y + 16}>{role}</RoleNumber>
        </g>
      ))}
      {verbal}
      {roles.map((role, i) => (
        <path key={role} d={`M${x + (i * ROLE)} ${top - 11}v${22 + ((rows.length - 1) * 12)}`} stroke="#b4b4b4" />
      ))}
      {rows.map((cells, i) => (
        <g key={cells[0]}>
          <Verbal x={x - 16} y={top + (i * 12)}>{i + 1}:</Verbal>
          {cells.map((cell, c) => <Verbal key={cell} x={x + (c * ROLE) + 1} y={top + (i * 12)}>{cell}</Verbal>)}
        </g>
      ))}
    </g>
  );
}

const feet = <path d="M5 1c4-1 4 5 2 8H4C2 6 2 2 5 1zM4 11h3v3H4zM13 5c4-1 4 5 2 8h-3c-2-3-2-7 1-8zM12 15h3v4h-3z" fill="#a8968e" />;

const Drawing = () => (
  <g>
    <LabelText x="502" y="161" $anchor="start">{'{ business, consumer }'}</LabelText>
    {types.map(type => <Type key={type.name} {...type} />)}
    {labels.map(([x, y, name]) => (
      <g key={name}>
        <circle cx={x} cy={y} r="14" fill="none" stroke="#000" strokeDasharray="3 1.500" />
        <LabelText x={x} y={y + 5}>{name}</LabelText>
      </g>
    ))}
    <path d={wires.join('')} fill="none" stroke="#000" />
    {dots.map(([x, y]) => <circle key={`${x}-${y}`} cx={x} cy={y} r="3" />)}
    <circle cx="1108" cy="720" r="7.500" fill="#fff" stroke="#000" />
    <circle cx="1108" cy="720" r="5" />
    <Mark x={526} y={480} size={14}>{art.check}</Mark>
    <Mark x={686} y={250} size={14}>
      <circle cx="10" cy="10" r="8.500" fill="#fff" stroke="#666" strokeWidth="2" />
      <path d="M6 11v4M9 9v6M12 6v9" stroke="#e2541b" strokeWidth="2" />
      <path d="M15 9v5" stroke="#888" />
    </Mark>
    <Mark x={704} y={250} size={14}>
      <path d="M10 1.500c4.500 0 5 5 2.500 8-1 2.500 6 2 6 6.500 0 3-17 3-17 0 0-4.500 7-4 6-6.500-2.500-3-2-8 2.500-8z" fill="#fff" stroke="#666" strokeWidth="2" />
    </Mark>
    <Mark x={854} y={250} size={14}>{feet}</Mark>
    <Mark x={974} y={770} size={14}>{feet}</Mark>
    <Mark x={846} y={480} size={14}>
      <path d="M17 2L2 9l7 2 4 6z" fill="#fff" stroke="#333" strokeWidth="1.800" />
    </Mark>
    <Mark x={685} y={589} size={16}>
      <circle cx="10" cy="9" r="8" fill="#eee" stroke="#111" strokeWidth="2" />
      <path d="M2 9h16M10 1v16M4 5h12M4 13h12M10 1c-6 5-6 11 0 16M10 1c6 5 6 11 0 16" fill="none" stroke="#111" />
      <path d="M11 16l5 4v-6z" />
    </Mark>
    <Mark x={1604} y={738} size={32}>{art.dots}</Mark>
    <path d="M1582 728l12 10" stroke="#c8a400" strokeWidth="6" />
  </g>
);

/* ---------- document area ---------- */

const DocTabs = styled.div`
  display: flex;
  align-items: flex-start;
  flex: none;
  height: 29px;
  font: 12px/16px ${fonts.sans};
`;

const DocTab = styled.button`
  display: flex;
  align-items: center;
  gap: 8px;
  height: 23px;
  margin: 0;
  padding: ${p => (p.$first ? '0 14px 0 1px' : '0 13px 0 12px')};
  border: 0;
  border-right: 1px solid ${palette.edge};
  background: none;
  ${p => p.$on && css`
    margin: 0 7px 0 6px;
    padding: 0 3px 0 5px;
    border: 1px solid #777;
    border-color: #777 #fff #fff #777;
    background: #fafafa;
    box-shadow: 7px 0 0 -1px ${palette.face}, 7px 0 0 0 ${palette.edge};
  `}
`;

const CanvasRow = styled.div`
  display: flex;
  flex: 1;
  min-height: 0;
`;

const Canvas = styled.svg`
  flex: 1;
  min-width: 0;
  height: 100%;
  overflow: hidden;
  background: #fff;
`;

const Documents = () => (
  <Column>
    <DocTabs>
      <DocTab $first>Welcome Page</DocTab>
      <DocTab><Icon name="chat" size={15} />customerorder.exp</DocTab>
      <DocTab><Icon name="scroll" size={15} />customerorder - ERStudio_ERStudio</DocTab>
      <DocTab $on><Icon name="molecule" size={15} />full.igd</DocTab>
      <DocTab><Icon name="scroll" size={15} />customerorder - ERStudio_SQL2011_create</DocTab>
    </DocTabs>
    <Toolbar $framed $indent={2} $height={29}>
      <Tools
        items={[
          ':', 'total', 'ring', 'totalPin', 'ringPin', 'bracePin', 'split', '|', '*object', 'fact', 'route', '|',
          '*select', 'hand', '|', 'zoomIn', 'zoomReset', 'zoomOut', '|', 'alignDown', 'alignUp', 'alignMid', '|',
          'label', 'chat', 'cards', 'caret',
        ]}
      />
    </Toolbar>
    <CanvasRow>
      <Canvas>
        <g transform="translate(-286.500 -127.500)"><Drawing /></g>
      </Canvas>
      <ScrollBar vertical before={398} thumb={134} after={270} />
    </CanvasRow>
    <ScrollBar corner before={601} thumb={149} after={453} />
    <Tabs names={['Diagram', 'Expressions', 'Notes']} height={22} below />
    <StatusBar $height={23} $top>
      <StatusCell $width={119} $pad={2}><Icon name="toggle" size={18} />Connected</StatusCell>
      <StatusCell $width={300} />
      <StatusCell />
    </StatusBar>
  </Column>
);

/* ---------- project manager ---------- */

const SplitButton = styled.div`
  position: relative;
  display: flex;
`;

const Popup = styled.ul`
  position: absolute;
  z-index: 2;
  top: 26px;
  left: 0;
  width: 201px;
  padding: 2px;
  border: 1px solid #ccc;
  background: #f2f2f2;
  box-shadow: 3px 3px 2px rgba(0, 0, 0, 0.500);
`;

const Choice = styled.button`
  display: block;
  width: 100%;
  height: 22px;
  padding: 0 0 1px 32px;
  border: 0;
  background: ${p => (p.$on ? '#91c9f7' : 'none')};
  color: ${p => (p.$off ? '#6d6d6d' : '#000')};
  text-align: left;
`;

const formats = [
  'Apache Cassandra', 'CaseTalk Prototype', 'Denodo', 'ER/Studio', 'ERwin', 'Interbase / Firebird',
  'JSON Table Schema', 'MariaDB 10', 'MongoDB', 'MsAccess 2.0', 'MsAccess 2016', 'MsAccess 7.0', 'MsAccess 8.0',
  'MsSqlServer 2005', 'MsSqlServer 2016', 'MsSqlServer 6', 'MySql', 'MySql 5', 'MySql 8', 'Object Pascal',
  'Oracle', 'Oracle 12', 'Postgresql', 'PowerDesigner', 'SQL 2011', "SQL'92", 'SQLite', 'Teradata', 'XML Schema',
  'UML/XMI', 'RDF/OWL', 'UML/XMI (2.x)', 'Pascal Test', 'PlantUML Classes', 'JSON Schema Draft 7',
];

const TreeList = styled.ul`
  flex: none;
  height: 376px;
  overflow: hidden;
  background: #fff;
  font: 11px/16px ${fonts.sans};
`;

const TreeRow = styled.li`
  display: flex;
  align-items: center;
  gap: ${p => (p.$leaf ? 6 : 4)}px;
  height: 16px;
  padding-left: ${p => p.$indent}px;
  font-weight: ${p => (p.$bold ? 700 : 400)};
  white-space: nowrap;
  & span {
    background: ${p => (p.$on ? '#ccc' : 'none')};
    color: ${p => (p.$on ? '#fff' : '#000')};
    box-shadow: ${p => (p.$on ? '-6px 0 0 #ccc' : 'none')};
  }
`;

const Twig = styled.i`
  width: 11px;
  height: 16px;
  flex: none;
  border-left: 1px dotted #888;
  background: linear-gradient(90deg, #999 50%, transparent 50%) 0 8px / 2px 1px repeat-x;
`;

const NoIcon = styled.i`
  flex: none;
  width: 14px;
`;

const scripts = [
  ['customerorder - ERStudio_ErStudio.bas', true], ['customerorder.sql'],
  ['customerorder - ERStudio_SQL2011_create.sql', true], ['customerorder - ERStudio_Teradata.sql'],
  ['customerorder - ERStudio_Sql_Product.sql'], ['customerorder - ERStudio_Sql_Classes.sql'],
  ['customerorder - ERStudio_Sql_MsAccess.sql'], ['customerorder - ERStudio_Sql_Firebird.sql'],
  ['customerorder - ERStudio_Progress.sql'],
];

const Properties = styled.div`
  flex: none;
  padding: 2px 5px 0;
  overflow: hidden;
  background: #fff;
  font: 12px/16px ${fonts.sans};
  white-space: pre;
`;

const details = [
  'File: full.igd',
  'Path: \\\\Mac\\Home\\Documents\\CaseTalk\\Conversion\\2020 DataVault Event',
  '',
  'State: Editable',
  '',
  'Name: full.igd',
  '',
  'Author: marco',
  'File format: 2',
  'Created: 24/11/2020',
  'Last modified: 24/11/2020',
];

const Preview = styled(Canvas)`
  width: 100%;
  min-height: 0;
`;

const ProjectManager = () => (
  <Column $width={374}>
    <PaneTitle $top={4}>customerorder.prj - Project Manager</PaneTitle>
    <Toolbar $indent={3}>
      <Tools items={['addFile', 'caret', 'removeFile']} />
      <SplitButton>
        <Tools items={['*generate', '*caret']} />
        <Popup>
          {formats.map(name => (
            <li key={name}>
              <Choice $on={name === 'PowerDesigner'} $off={name === 'Pascal Test'}>{name}</Choice>
            </li>
          ))}
        </Popup>
      </SplitButton>
      <Tools items={['|', 'package', 'caret', '|', 'up', 'down', '|', 'props', 'lockOpen', '|', 'share']} />
    </Toolbar>
    <TreeList>
      <TreeRow $indent={3} $bold><Icon name="cloud" size={15} /><Icon name="cabinet" size={15} /><span>customerorder.prj</span></TreeRow>
      <TreeRow $indent={4} $bold><Icon name="chevron" size={12} /><Icon name="cloud" size={15} /><Icon name="greenDrum" size={15} /><span>customerorder.ig</span></TreeRow>
      <TreeRow $indent={30} $leaf $bold><Twig /><Icon name="chat" size={14} /><span>customerorder.exp</span></TreeRow>
      <TreeRow $indent={30} $leaf $bold $on><Twig /><Icon name="molecule" size={14} /><span>full.igd</span></TreeRow>
      <TreeRow $indent={23} $leaf><Icon name="chevron" size={12} /><Icon name="redDrum" size={14} /><span>customerorder</span></TreeRow>
      {scripts.map(([name, bold], i) => (
        <TreeRow key={name} $indent={49} $leaf $bold={bold}>
          <Twig />
          {i === 0 ? <Icon name="scroll" size={14} /> : <NoIcon />}
          <span>{name}</span>
        </TreeRow>
      ))}
    </TreeList>
    <PaneTitle $height={23} $top={3}><Icon name="molecule" size={14} />Properties</PaneTitle>
    <Properties>{details.join('\n')}</Properties>
    <Preview aria-hidden="true">
      <g transform="translate(-74.500 9) scale(0.270)"><Drawing /></g>
    </Preview>
    <Tabs names={['Project', 'History', 'Server']} height={21} below />
  </Column>
);

const mainTools = [
  'newProject', 'newModel', 'newKey', 'newTag', '|', 'openRecent', 'saveAll', 'open', 'save', 'props', '|',
  'print', '|', 'cut', 'copy', 'paste', 'undo', 'caret', 'redo', 'caret', '|', 'options', '|', 'hourglass',
];

const menus = [
  'File', 'Edit', 'Search', 'View', 'Project', 'Repository', 'Teams', 'Run', 'Diagram', 'Bookmarks', 'Tools',
  'Tabs', 'Help',
];

function App() {
  return (
    <Window>
      <GlobalStyle />
      <TitleBar>
        <Icon name="logo" size={16} />
        <h1>CaseTalk Server - customerorder</h1>
        <Caption aria-label="Minimize"><svg width="10" height="10"><path d="M0 5.500h10" stroke="#000" /></svg></Caption>
        <Caption aria-label="Restore"><svg width="10" height="10"><path d="M.5 2.500h7v7h-7zM2.500 2.500v-2h7v7h-2" fill="none" stroke="#000" /></svg></Caption>
        <Caption aria-label="Close"><svg width="10" height="10"><path d="M0 0l10 10M10 0L0 10" stroke="#000" /></svg></Caption>
      </TitleBar>
      <MenuBar>{menus.map(name => <button key={name}>{name}</button>)}</MenuBar>
      <Toolbar $indent={1} $height={25}><Tools items={mainTools} /></Toolbar>
      <Workspace>
        <Repository />
        <Documents />
        <ProjectManager />
      </Workspace>
      <StatusBar>
        <StatusCell $width={532} />
        <StatusCell $width={178} />
        <StatusCell $width={189} />
        <StatusCell $width={120} />
        <StatusCell $pad={5}>1.3GB/8.0GB</StatusCell>
      </StatusBar>
    </Window>
  );
}

export default App;
